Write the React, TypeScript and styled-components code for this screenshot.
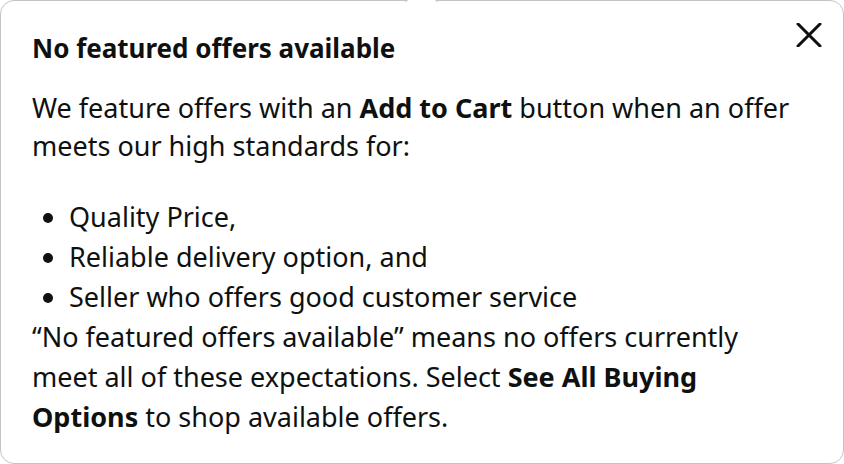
import React from 'react';
import styled, { createGlobalStyle } from 'styled-components';

const GlobalStyle = createGlobalStyle`
  html, body {
    margin: 0;
    padding: 0;
    background: #ffffff;
  }
  body {
    font-family: 'Noto Sans', 'Open Sans', Arial, sans-serif;
    color: #0f1111;
  }
`;

const Popover = styled.div`
  position: relative;
  box-sizing: border-box;
  height: 464px;
  background: #ffffff;
  border: 1px solid #c2c5c5;
  border-radius: 14px;
  padding: 20px 19px 0 31px;
`;

const Arrow = styled.div`
  position: absolute;
  top: -11px;
  left: 409px;
  width: 22px;
  height: 22px;
  background: #ffffff;
  border-top: 1px solid #c2c5c5;
  border-left: 1px solid #c2c5c5;
  transform: rotate(45deg);
`;

const Header = styled.div`
  display: flex;
  justify-content: space-between;
  align-items: flex-start;
`;

const Title = styled.h4`
  margin: 10px 0 0;
  font-size: 26px;
  line-height: 34px;
  font-weight: 700;
`;

const CloseButton = styled.button`
  display: flex;
  align-items: center;
  justify-content: center;
  width: 30px;
  height: 28px;
  padding: 0;
  border: none;
  background: transparent;
  cursor: pointer;
`;

const Body = styled.div`
  width: 765px;
  margin-top: 24px;
  font-size: 27px;
  line-height: 38px;
`;

const Para = styled.p<{ $loose?: boolean }>`
  margin: 0;
  line-height: ${p => (p.$loose ? '40px' : '38px')};
`;

const List = styled.ul`
  margin: 32px 0 0;
  padding-left: 37px;
  list-style: disc;

  li {
    line-height: 40px;
  }
`;

export default function App() {
  return (
    <>
      <GlobalStyle />
      <Popover>
        <Arrow />
        <Header>
          <Title>No featured offers available</Title>
          <CloseButton aria-label="Close">
            <svg width="26" height="24" viewBox="0 0 26 24">
              <path d="M2 1 L24 23 M24 1 L2 23" stroke="#0f1111" strokeWidth="3" strokeLinecap="round" />
            </svg>
          </CloseButton>
        </Header>
        <Body>
          <Para>
            We feature offers with an <b>Add to Cart</b> button when an offer meets our high standards for:
          </Para>
          <List>
            <li>Quality Price,</li>
            <li>Reliable delivery option, and</li>
            <li>Seller who offers good customer service</li>
          </List>
          <Para $loose>
            “No featured offers available” means no offers currently meet all of these expectations. Select{' '}
            <b>See All Buying Options</b> to shop available offers.
          </Para>
        </Body>
      </Popover>
    </>
  );
}
